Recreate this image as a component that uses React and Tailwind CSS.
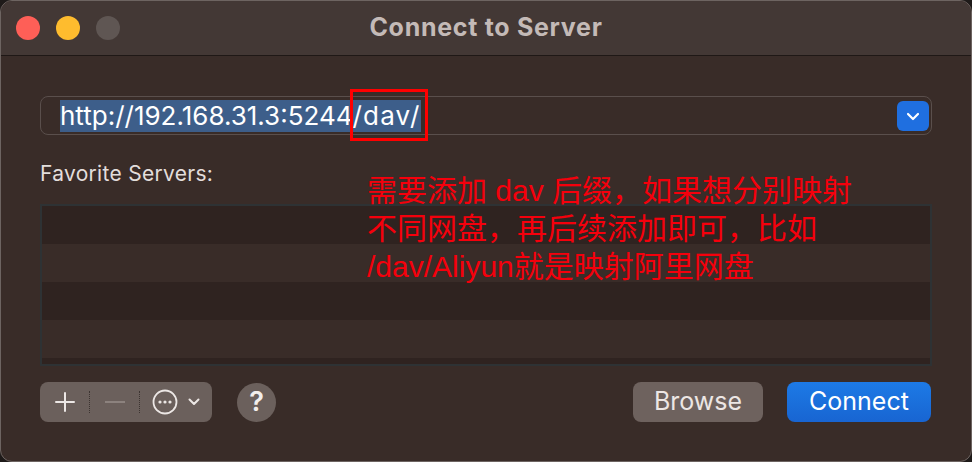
import React from "react";

const SF = { fontFamily: "Inter, 'Noto Sans', sans-serif" };

const Row = ({ dark }) => (
  <div className={`h-[38px] ${dark ? "bg-[#2f2320]" : "bg-[#392c28]"}`}></div>
);

export default function App() {
  return (
    <div className="w-[972px] h-[462px] bg-[#1e1a19] overflow-hidden" style={SF}>
      <div className="relative w-[972px] h-[462px] rounded-[12px] border border-[#6d6461] bg-[#392c28] overflow-hidden flex flex-col">
        {/* Title bar */}
        <div className="relative h-[55px] shrink-0 bg-[#433835] border-b border-[#1f1816] flex items-center">
          <div className="flex gap-[16px] pl-[15px]">
            <div className="w-[24px] h-[24px] rounded-full bg-[#fe5f57]"></div>
            <div className="w-[24px] h-[24px] rounded-full bg-[#febc2e]"></div>
            <div className="w-[24px] h-[24px] rounded-full bg-[#5f5653]"></div>
          </div>
          <div className="absolute inset-0 flex items-center justify-center text-[25px] font-bold tracking-[0.7px] text-[#c4bab7]">
            Connect to Server
          </div>
        </div>

        {/* Body */}
        <div className="flex flex-col px-[39px] pt-[40px]">
          {/* URL field */}
          <div className="relative h-[39px] rounded-[8px] border border-[#5a4f4c] flex items-center justify-between pl-[19px] pr-[2px]">
            <span className="bg-[#3d5e8a] text-white text-[26px] leading-[32px]">
              http://192.168.31.3:5244<span className="tracking-[1.2px]">/dav/</span>
            </span>
            <div className="w-[32px] h-[30px] rounded-[6px] bg-[#1f6fe0] flex items-center justify-center">
              <svg width="14" height="10" viewBox="0 0 14 10" fill="none">
                <path d="M2 3 L7 8 L12 3" stroke="white" strokeWidth="2.2" strokeLinecap="round" strokeLinejoin="round" />
              </svg>
            </div>
            <div className="absolute left-[309px] top-[-8px] w-[78px] h-[52px] border-[3px] border-[#ff0000]"></div>
          </div>

          <div className="mt-[25px] text-[21px] tracking-[0.3px] text-[#e3dedc] leading-[28px]">Favorite Servers:</div>

          {/* List */}
          <div className="mt-[16px] h-[162px] border-2 border-[#2e3234] bg-[#2f2320] overflow-hidden">
            <Row dark />
            <Row />
            <Row dark />
            <Row />
          </div>

          {/* Bottom controls */}
          <div className="mt-[16px] flex items-center justify-between pr-[1px]">
            <div className="flex items-center gap-[25px]">
              <div className="w-[172px] h-[40px] rounded-[8px] bg-[#6b605c] flex items-center text-[#ece7e5]">
                <div className="w-[49px] flex justify-center">
                  <svg width="22" height="22" viewBox="0 0 22 22">
                    <path d="M11 2 V20 M2 11 H20" stroke="#ece7e5" strokeWidth="2" strokeLinecap="round" />
                  </svg>
                </div>
                <div className="w-px h-[22px] border-l border-dotted border-[#3c3431]"></div>
                <div className="w-[49px] flex justify-center">
                  <svg width="22" height="4" viewBox="0 0 22 4">
                    <path d="M1 2 H21" stroke="#8c827e" strokeWidth="2" />
                  </svg>
                </div>
                <div className="w-px h-[22px] border-l border-dotted border-[#3c3431]"></div>
                <div className="flex items-center gap-[10px] pl-[12px]">
                  <svg width="26" height="26" viewBox="0 0 26 26">
                    <circle cx="13" cy="13" r="11.5" stroke="#ece7e5" strokeWidth="1.8" fill="none" />
                    <circle cx="8" cy="13" r="1.6" fill="#ece7e5" />
                    <circle cx="13" cy="13" r="1.6" fill="#ece7e5" />
                    <circle cx="18" cy="13" r="1.6" fill="#ece7e5" />
                  </svg>
                  <svg width="12" height="8" viewBox="0 0 12 8" fill="none">
                    <path d="M1.5 1.5 L6 6 L10.5 1.5" stroke="#ece7e5" strokeWidth="2" strokeLinecap="round" strokeLinejoin="round" />
                  </svg>
                </div>
              </div>
              <div className="w-[39px] h-[39px] rounded-full bg-[#6b605c] flex items-center justify-center text-[27px] font-semibold text-[#f2eeec]">
                ?
              </div>
            </div>
            <div className="flex items-center gap-[24px]">
              <div className="w-[130px] h-[40px] rounded-[8px] bg-[#6e625e] flex items-center justify-center text-[25px] text-[#ece6e4]">
                Browse
              </div>
              <div className="w-[144px] h-[40px] rounded-[8px] bg-gradient-to-b from-[#1d7ae6] to-[#1865d2] flex items-center justify-center text-[25px] text-white">
                Connect
              </div>
            </div>
          </div>
        </div>

        {/* Annotation */}
        <div
          className="absolute left-[366px] top-[171px] text-[30px] leading-[38px] text-[#f5000c]"
          style={{ fontFamily: "'Liberation Sans', 'Noto Sans CJK SC', sans-serif" }}
        >
          <div>需要添加 dav 后缀，如果想分别映射</div>
          <div>不同网盘，再后续添加即可，比如</div>
          <div>/dav/Aliyun就是映射阿里网盘</div>
        </div>
      </div>
    </div>
  );
}
